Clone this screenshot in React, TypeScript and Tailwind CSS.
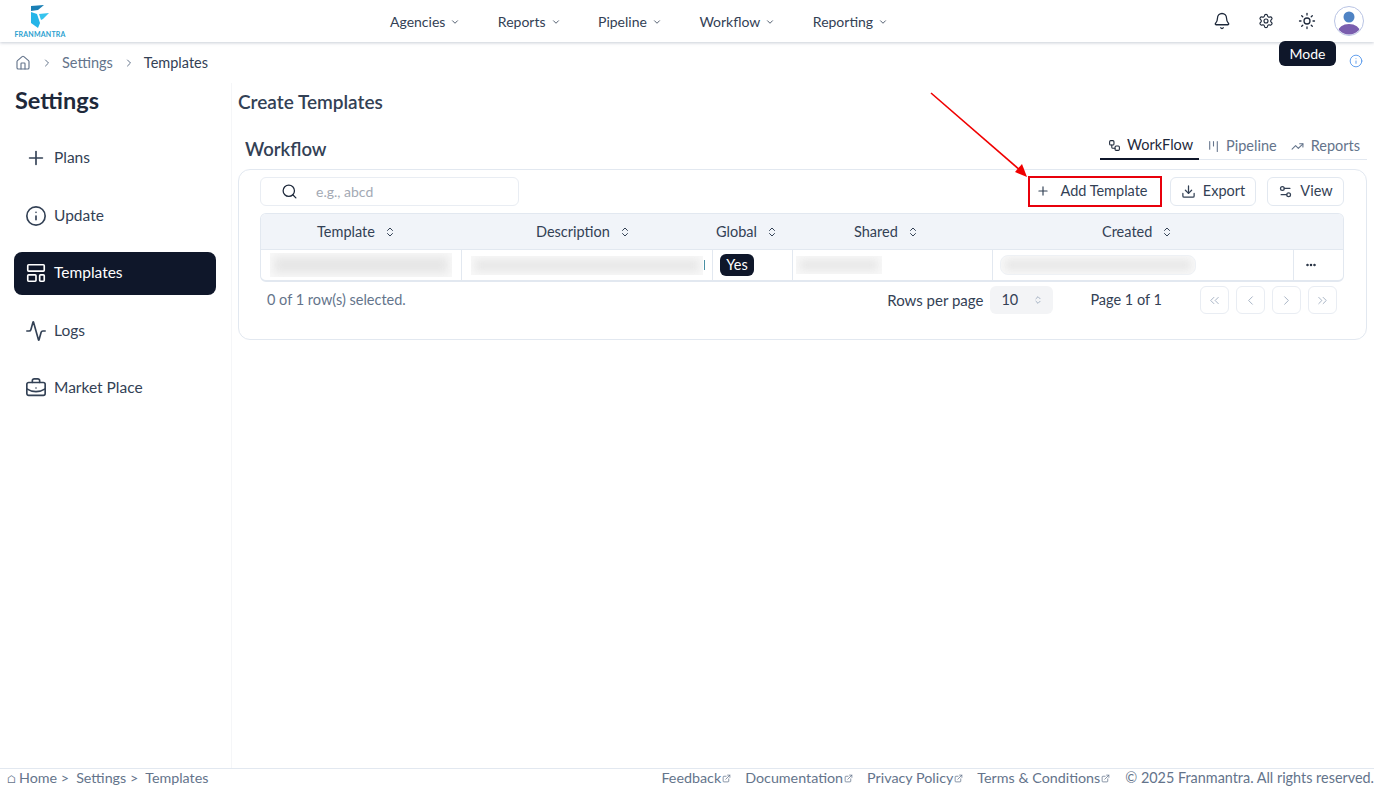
import {
  Activity,
  Bell,
  BriefcaseBusiness,
  ChevronDown,
  ChevronLeft,
  ChevronRight,
  ChevronsLeft,
  ChevronsRight,
  ChevronsUpDown,
  Download,
  Ellipsis,
  ExternalLink,
  House,
  Info,
  Kanban,
  LayoutTemplate,
  Plus,
  Search,
  Settings,
  Settings2,
  Sun,
  TrendingUp,
  Workflow,
} from "lucide-react";

const navItems = ["Agencies", "Reports", "Pipeline", "Workflow", "Reporting"];

const sideItems = [
  { label: "Plans", icon: <Plus className="w-[22px] h-[22px]" strokeWidth={1.8} /> },
  { label: "Update", icon: <Info className="w-[22px] h-[22px]" strokeWidth={1.8} /> },
  { label: "Templates", icon: <LayoutTemplate className="w-[22px] h-[22px]" strokeWidth={1.8} />, active: true },
  { label: "Logs", icon: <Activity className="w-[22px] h-[22px]" strokeWidth={1.8} /> },
  { label: "Market Place", icon: <BriefcaseBusiness className="w-[22px] h-[22px]" strokeWidth={1.8} /> },
];

const columns = [
  { label: "Template", width: "w-[201px]", pad: "pl-[56px]" },
  { label: "Description", width: "w-[251px]", pad: "pl-[74px]" },
  { label: "Global", width: "w-[80px]", pad: "pl-[3px]" },
  { label: "Shared", width: "w-[200px]", pad: "pl-[61px]" },
  { label: "Created", width: "w-[301px]", pad: "pl-[109px]" },
];

const footerLinks = ["Feedback", "Documentation", "Privacy Policy", "Terms & Conditions"];

function Logo() {
  return (
    <div className="flex flex-col items-center w-[50px] ml-[15px]">
      <svg width="20" height="24" viewBox="0 0 20 24">
        <path d="M1 1 L14 0 L8 5 L1 6 Z" fill="#1a7fb5" />
        <path d="M1 7 L7 9 L10 18 L8 23 L1 18 Z" fill="#25b5e8" />
        <path d="M9 9 L19 8 L13 14 L11 15 Z" fill="#35c4ee" />
      </svg>
      <span className="text-[7px] leading-[8px] mt-[1px] font-bold tracking-[0.2px] text-[#2a9fd0]">FRANMANTRA</span>
    </div>
  );
}

function Avatar() {
  return (
    <svg width="30" height="30" viewBox="0 0 30 30">
      <defs>
        <clipPath id="av">
          <circle cx="15" cy="15" r="13.5" />
        </clipPath>
      </defs>
      <circle cx="15" cy="15" r="14.5" fill="#fff" stroke="#b9c4e4" />
      <g clipPath="url(#av)">
        <circle cx="15" cy="11" r="5.5" fill="#4f83c4" />
        <ellipse cx="15" cy="26" rx="11" ry="8" fill="#7a5eae" />
      </g>
    </svg>
  );
}

function Blur({ className }: { className: string }) {
  return (
    <div className={`overflow-hidden bg-[#f8f8f8] ${className}`}>
      <div className="m-[4px] h-[calc(100%-8px)] bg-[#e6e6e6] blur-[4px]" />
    </div>
  );
}

export default function App() {
  return (
    <div className="relative h-[787px] w-[1374px] overflow-hidden bg-white flex flex-col font-['Lato',sans-serif] text-[#1e293b]">
      {/* Header */}
      <header className="h-[42px] shrink-0 flex items-center shadow-[0_1px_3px_rgba(100,116,139,0.35)] relative">
        <Logo />
        <nav className="absolute left-[390px] top-0 h-[42px] flex items-center gap-[37.5px]">
          {navItems.map((item) => (
            <div key={item} className="flex items-center gap-[5px] text-[14px] text-[#334155]">
              {item}
              <ChevronDown className="w-[10px] h-[10px] mt-[2px]" />
            </div>
          ))}
        </nav>
        <div className="ml-auto flex items-center pr-[10px]">
          <Bell className="w-[18px] h-[18px]" strokeWidth={1.7} />
          <Settings className="w-[16px] h-[16px] ml-[27px]" strokeWidth={1.7} />
          <Sun className="w-[18px] h-[18px] ml-[24px]" strokeWidth={1.7} />
          <div className="ml-[18px] flex">
            <Avatar />
          </div>
        </div>
      </header>

      {/* Breadcrumb */}
      <div className="h-[41px] shrink-0 flex items-center pl-[15px] pr-[11px] text-[14.5px]">
        <House className="w-[16px] h-[16px] text-[#64748b]" strokeWidth={1.7} />
        <ChevronRight className="w-[12px] h-[12px] ml-[10px] text-[#64748b]" />
        <span className="ml-[9px] text-[#64748b]">Settings</span>
        <ChevronRight className="w-[12px] h-[12px] ml-[10px] text-[#64748b]" />
        <span className="ml-[9px] text-[#334155]">Templates</span>
        <Info className="w-[14px] h-[14px] ml-auto mb-[4px] text-[#4f94ea]" strokeWidth={1.5} />
      </div>

      <div className="flex-1 flex min-h-0">
        {/* Sidebar */}
        <aside className="w-[232px] shrink-0 border-r border-[#f5f6f8] pl-[14px] pr-[15px]">
          <h1 className="ml-[1px] text-[23.5px] leading-[36px] font-bold text-[#1e293b] -mt-[1px]">Settings</h1>
          <ul className="mt-[18.5px] flex flex-col gap-[14.5px]">
            {sideItems.map((item) => (
              <li
                key={item.label}
                className={`h-[43px] flex items-center gap-[7px] pl-[11px] rounded-lg text-[15.5px] ${
                  item.active ? "bg-[#0f172a] text-white" : "text-[#334155]"
                }`}
              >
                {item.icon}
                {item.label}
              </li>
            ))}
          </ul>
        </aside>

        {/* Main */}
        <main className="flex-1 pl-[6px] pr-[7px]">
          <h2 className="mt-[1px] text-[19px] leading-[36px] font-semibold text-[#334155]">Create Templates</h2>
          <div className="mt-[11px] flex items-end justify-between pl-[7px]">
            <h3 className="text-[18.5px] leading-[28px] -mb-[3px] font-semibold text-[#334155]">Workflow</h3>
            <div className="flex items-center border-b border-[#e2e8f0] text-[14.5px] h-[29px]">
              <div className="w-[99px] h-[29px] pt-[2px] flex items-center pl-[8px] gap-[6px] border-b-2 border-[#0f172a] text-[#1e293b]">
                <Workflow className="w-[13px] h-[13px]" />
                WorkFlow
              </div>
              <div className="flex items-center gap-[6px] ml-[8px] pt-[2px] text-[#64748b]">
                <Kanban className="w-[13px] h-[13px]" />
                Pipeline
              </div>
              <div className="flex items-center gap-[7px] ml-[14px] mr-[7px] pt-[2px] text-[#64748b]">
                <TrendingUp className="w-[13px] h-[13px]" />
                Reports
              </div>
            </div>
          </div>

          {/* Card */}
          <section className="mt-[9px] h-[171px] rounded-xl border border-[#e2e8f0] pl-[21px] pr-[22px] pt-[6px]">
            <div className="flex items-center h-[30px]">
              <div className="w-[259px] h-[29px] flex items-center rounded-md border border-[#e9edf3] pl-[20px]">
                <Search className="w-[17px] h-[17px] text-[#1e293b]" strokeWidth={1.8} />
                <span className="ml-[18px] text-[14px] text-[#a3a9b4]">e.g., abcd</span>
              </div>
              <button className="ml-auto w-[132px] h-[29px] pr-[6px] flex items-center justify-center gap-[10px] text-[14.5px] text-[#334155] outline-2 -outline-offset-1 outline-[#e8000b]">
                <Plus className="w-[14px] h-[14px]" />
                Add Template
              </button>
              <button className="ml-[9px] w-[86px] h-[29px] flex items-center justify-center gap-[7px] rounded-md border border-[#e2e8f0] text-[14.5px] text-[#334155]">
                <Download className="w-[15px] h-[15px]" />
                Export
              </button>
              <button className="ml-[11px] w-[77px] h-[29px] flex items-center justify-center gap-[7px] rounded-md border border-[#e2e8f0] text-[14.5px] text-[#334155]">
                <Settings2 className="w-[15px] h-[15px]" />
                View
              </button>
            </div>

            {/* Table */}
            <div className="mt-[7px] rounded-md border border-b-2 border-[#e2e8f0] overflow-hidden">
              <div className="h-[36px] flex items-center bg-[#f1f4f9] border-b border-[#e2e8f0] text-[14.5px] text-[#334155]">
                {columns.map((col) => (
                  <div key={col.label} className={`${col.width} ${col.pad} flex items-center gap-[9px]`}>
                    {col.label}
                    <ChevronsUpDown className="w-[12px] h-[12px]" />
                  </div>
                ))}
              </div>
              <div className="h-[30px] flex items-stretch">
                <div className="w-[201px] border-r border-[#e2e8f0] flex items-center pl-[9px]">
                  <Blur className="w-[182px] h-[24px]" />
                </div>
                <div className="w-[251px] border-r border-[#e2e8f0] flex items-center pl-[9px] gap-[1px]">
                  <Blur className="w-[232px] h-[19px]" />
                  <div className="w-[1px] h-[10px] bg-[#4a90a4]" />
                </div>
                <div className="w-[80px] border-r border-[#e2e8f0] flex items-center pl-[7px]">
                  <span className="h-[22px] w-[34px] flex items-center justify-center rounded-md bg-[#0f172a] text-white text-[14.5px]">
                    Yes
                  </span>
                </div>
                <div className="w-[200px] border-r border-[#e2e8f0] flex items-center pl-[3px]">
                  <Blur className="w-[86px] h-[18px]" />
                </div>
                <div className="w-[301px] border-r border-[#e2e8f0] flex items-center pl-[7px]">
                  <Blur className="w-[196px] h-[20px] rounded-lg border border-[#eef1f5]" />
                </div>
                <div className="flex-1 flex items-center pl-[11px]">
                  <Ellipsis className="w-[12px] h-[12px] text-[#1e293b]" strokeWidth={3} />
                </div>
              </div>
            </div>

            {/* Pagination */}
            <div className="mt-[4px] h-[28px] flex items-center pl-[7px] text-[14.5px]">
              <span className="text-[#64748b]">0 of 1 row(s) selected.</span>
              <span className="ml-auto text-[15px] text-[#334155]">Rows per page</span>
              <div className="ml-[7px] w-[63px] h-[28px] rounded-md bg-[#f3f4f6] flex items-center pl-[11px] gap-[15px] text-[#334155]">
                10
                <ChevronsUpDown className="w-[10px] h-[10px] text-[#94a3b8]" />
              </div>
              <span className="ml-[37px] text-[#334155]">Page 1 of 1</span>
              <div className="ml-[38px] mr-[7px] flex items-center gap-[7px] text-[#94a3b8]">
                <div className="w-[29px] h-[28px] rounded-md border border-[#e9edf3] flex items-center justify-center">
                  <ChevronsLeft className="w-[15px] h-[15px]" strokeWidth={1.3} />
                </div>
                <div className="w-[29px] h-[28px] rounded-md border border-[#e9edf3] flex items-center justify-center">
                  <ChevronLeft className="w-[15px] h-[15px]" strokeWidth={1.3} />
                </div>
                <div className="w-[29px] h-[28px] rounded-md border border-[#e9edf3] flex items-center justify-center">
                  <ChevronRight className="w-[15px] h-[15px]" strokeWidth={1.3} />
                </div>
                <div className="w-[29px] h-[28px] rounded-md border border-[#e9edf3] flex items-center justify-center">
                  <ChevronsRight className="w-[15px] h-[15px]" strokeWidth={1.3} />
                </div>
              </div>
            </div>
          </section>
        </main>
      </div>

      {/* Footer */}
      <footer className="h-[19px] shrink-0 border-t border-[#e2e8f0] flex items-center pl-[7px] text-[14.3px] text-[#64748b]">
        <span>
          <span className="text-[11px]">⌂</span> Home &gt;
        </span>
        <span className="ml-[7px]">Settings &gt;</span>
        <span className="ml-[7px]">Templates</span>
        <div className="ml-auto flex items-center gap-[14px]">
          {footerLinks.map((link) => (
            <span key={link} className="flex items-center gap-[1px]">
              {link}
              <ExternalLink className="w-[9px] h-[9px]" />
            </span>
          ))}
          <span className="ml-[1px] text-[14.4px]">© 2025 Franmantra. All rights reserved.</span>
        </div>
      </footer>

      {/* Tooltip */}
      <div className="absolute left-[1279px] top-[41px] w-[57px] h-[25px] rounded-md bg-[#0f172a] text-white text-[14px] flex items-center justify-center">
        Mode
      </div>

      {/* Annotation arrow */}
      <svg className="absolute left-[925px] top-[88px]" width="110" height="95" viewBox="0 0 110 95">
        <line x1="6" y1="5" x2="96" y2="83" stroke="#f00000" strokeWidth="1.6" />
        <path d="M102 89 L90 84 L97 76 Z" fill="#f00000" />
      </svg>
    </div>
  );
}
